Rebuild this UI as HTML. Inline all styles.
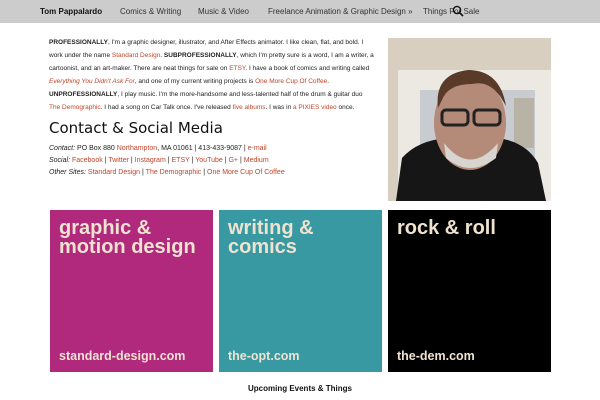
<!DOCTYPE html>
<html><head><style>
*{margin:0;padding:0;box-sizing:border-box}
body{width:600px;height:400px;overflow:hidden;background:#fff;font-family:"Liberation Sans",Arial,sans-serif;color:#222;position:relative}
.nav{position:absolute;left:0;top:0;width:600px;height:23px;background:#cccccc;font-size:8px;color:#333}
.nav span{position:absolute;top:7px;white-space:nowrap}
a,.r{color:#c0452b;text-decoration:none}
.txt{position:absolute;left:49px;top:36px;width:340px;font-size:6.5px;line-height:13px;color:#222;white-space:nowrap}
h2{position:absolute;left:49px;top:119px;font-size:15px;font-weight:normal;color:#111;font-family:"DejaVu Sans","Liberation Sans",sans-serif}
.c{position:absolute;left:49px;top:143px;font-size:7px;line-height:12.2px}
.photo{position:absolute;left:388px;top:38px;width:163px;height:163px;overflow:hidden;background:#ddd3c4}
.t{position:absolute;top:210px;width:163px;height:162px;color:#efe3cf;font-weight:bold}
.t .h{position:absolute;left:9px;top:9px;font-size:20px;line-height:19px}
.t .f{position:absolute;left:9px;top:139px;font-size:12.5px}
.up{position:absolute;left:0;width:600px;top:384px;text-align:center;font-size:8px;font-weight:bold;color:#111}
</style></head><body>
<div class="nav">
<span style="left:40px;font-weight:bold;color:#111">Tom Pappalardo</span>
<span style="left:120px">Comics &amp; Writing</span>
<span style="left:198px">Music &amp; Video</span>
<span style="left:268px">Freelance Animation &amp; Graphic Design »</span>
<span style="left:423px">Things For Sale</span>
<svg style="position:absolute;left:452px;top:5px" width="12" height="12" viewBox="0 0 12 12"><circle cx="5" cy="5" r="3.6" fill="none" stroke="#111" stroke-width="1.4"/><line x1="7.6" y1="7.6" x2="11" y2="11" stroke="#111" stroke-width="1.6"/></svg>
</div>
<div class="txt"><b>PROFESSIONALLY</b>, I'm a graphic designer, illustrator, and After Effects animator. I like clean, flat, and bold. I<br>work under the name <a>Standard Design</a>. <b>SUBPROFESSIONALLY</b>, which I'm pretty sure is a word, I am a writer, a<br>cartoonist, and an art-maker. There are neat things for sale on <a>ETSY</a>. I have a book of comics and writing called<br><a><i>Everything You Didn't Ask For</i></a>, and one of my current writing projects is <a>One More Cup Of Coffee</a>.<br><b>UNPROFESSIONALLY</b>, I play music. I'm the more-handsome and less-talented half of the drum &amp; guitar duo<br><a>The Demographic</a>. I had a song on Car Talk once. I've released <a>five albums</a>. I was in <a>a PIXIES video</a> once.</div>
<h2>Contact &amp; Social Media</h2>
<div class="c"><i>Contact:</i> PO Box 880 <a>Northampton</a>, MA 01061 | 413-433-9087 | <a>e-mail</a><br><i>Social:</i> <a>Facebook</a> | <a>Twitter</a> | <a>Instagram</a> | <a>ETSY</a> | <a>YouTube</a> | <a>G+</a> | <a>Medium</a><br><i>Other Sites:</i> <a>Standard Design</a> | <a>The Demographic</a> | <a>One More Cup Of Coffee</a></div>
<div class="photo"><svg width="163" height="163" viewBox="0 0 163 163">
<rect width="163" height="163" fill="#d9cfc0"/>
<rect x="10" y="32" width="153" height="131" fill="#ece8e2"/>
<rect x="32" y="52" width="115" height="111" fill="#c8ccd0"/>
<rect x="126" y="60" width="20" height="50" fill="#b9b3a6"/>
<path d="M8 163 L14 120 Q30 102 60 100 L110 100 Q138 104 150 125 L158 163Z" fill="#161616"/>
<ellipse cx="82" cy="85" rx="36" ry="47" fill="#b48a78"/>
<path d="M50 70 Q46 36 80 32 Q112 32 118 68 L112 58 Q100 42 84 46 Q60 46 54 62Z" fill="#5a3a28"/>
<path d="M56 105 Q82 138 110 105 L108 120 Q82 140 58 120Z" fill="#d8d4cf"/>
<rect x="54" y="72" width="26" height="15" rx="4" fill="none" stroke="#222" stroke-width="3"/>
<rect x="86" y="72" width="26" height="15" rx="4" fill="none" stroke="#222" stroke-width="3"/>
</svg></div>
<div class="t" style="left:50px;background:#b0297d"><div class="h">graphic &amp;<br>motion design</div><div class="f">standard-design.com</div></div>
<div class="t" style="left:219px;background:#3899a2"><div class="h">writing &amp;<br>comics</div><div class="f">the-opt.com</div></div>
<div class="t" style="left:388px;background:#000"><div class="h">rock &amp; roll</div><div class="f">the-dem.com</div></div>
<div class="up">Upcoming Events &amp; Things</div>
</body></html>
